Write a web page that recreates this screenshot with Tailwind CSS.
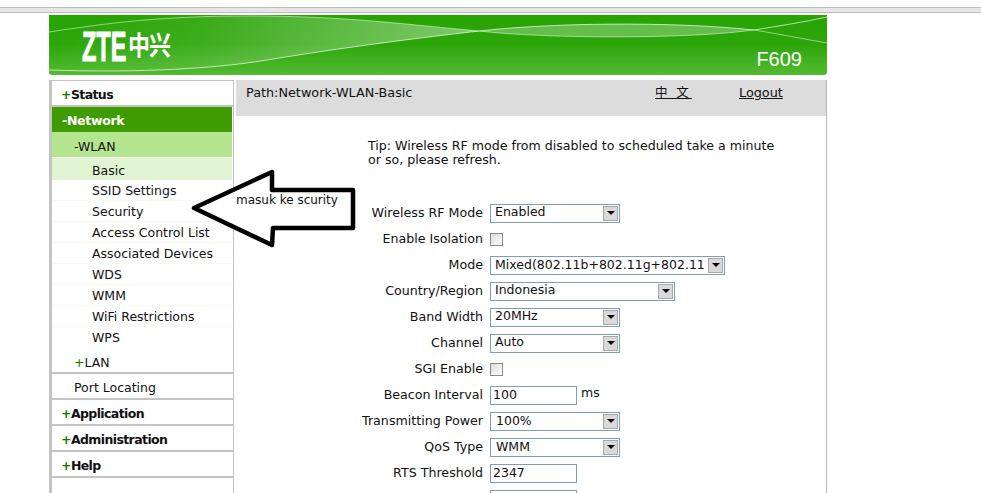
<!DOCTYPE html>
<html lang="en">
<head>
  <meta charset="UTF-8">
  <title>ZTE F609</title>
  <script src="https://cdn.jsdelivr.net/npm/@tailwindcss/browser@4"></script>
</head>
<body class="bg-white h-[493px] w-[981px] overflow-hidden relative font-['DejaVu_Sans',sans-serif] text-[12.8px] text-[#111]">
  <!-- browser strip -->
  <div class="mt-[7px] h-[6px] border-y border-[#bdbdbd] bg-[#e6e6e6]"></div>

  <div class="ml-[49px] w-[778px]">
    <!-- banner -->
    <div class="relative mt-[2px] h-[60px] rounded-b-[3px] overflow-hidden bg-gradient-to-b from-[#28a304] via-[#2ca609] to-[#52bb2f]">
      <svg class="absolute inset-0" width="778" height="60" viewBox="0 0 778 60">
        <defs>
          <linearGradient id="lens" x1="0" x2="1" y1="0" y2="0">
            <stop offset="0" stop-color="#fff" stop-opacity="0"/>
            <stop offset="0.35" stop-color="#fff" stop-opacity="0.08"/>
            <stop offset="0.7" stop-color="#fff" stop-opacity="0.26"/>
            <stop offset="1" stop-color="#fff" stop-opacity="0.4"/>
          </linearGradient>
        </defs>
        <path d="M0 17 C60 8 110 1 200 1 C300 1 360 10 430 16 C360 24 300 32 230 43 C170 54 90 58 0 55 Z" fill="url(#lens)"/>
        <path d="M430 16 C500 8 620 6 705 15 C640 24 500 24 430 16 Z" fill="#fff" opacity="0.28"/>
        <path d="M0 17 C60 8 110 1 200 1 C300 1 360 10 430 16 C500 24 640 24 705 15 C730 19 755 24 778 28" fill="none" stroke="#fff" stroke-opacity="0.5"/>
        <path d="M0 55 C90 58 170 54 230 43 C300 32 360 24 430 16 C500 8 620 6 705 15 C730 11 755 7 778 2" fill="none" stroke="#fff" stroke-opacity="0.65"/>
      </svg>
      <span class="absolute left-[33px] top-[11px] font-['Liberation_Sans',sans-serif] font-bold text-[42px] leading-none text-white scale-x-[0.56] origin-left [-webkit-text-stroke:1px_white]">ZTE</span>
      <span class="absolute left-[79px] top-[17px] font-['Noto_Sans_CJK_SC',sans-serif] font-bold text-[22px] leading-none tracking-[-1px] text-white scale-y-[1.2]">中兴</span>
      <div class="absolute right-[25px] top-[34px] font-['Liberation_Sans',sans-serif] text-[20px] leading-none text-white">F609</div>
    </div>

    <div class="flex mt-[5px] items-start">
      <!-- menu -->
      <div class="w-[185px] h-[420px] shrink-0 border-l-[3px] border-r border-t border-[#c4c4c4] text-[12.5px]">
        <div class="h-[26px] pt-[4px] border-b-2 border-[#c4c4c4] pl-[9px] flex items-center font-bold tracking-[-0.6px]"><span class="text-[#0a7d00]">+</span>Status</div>
        <div class="h-[25px] pt-[4px] mr-[1px] bg-[#3f9c00] text-white font-bold pl-[10px] flex items-center tracking-[-0.3px]">-Network</div>
        <div class="h-[26px] pt-[5px] mr-[1px] bg-[#b5e58f] pl-[22px] flex items-center border-b border-white">-WLAN</div>
        <div class="h-[22px] pt-[4px] mr-[1px] bg-[#e1f4d3] pl-[40px] flex items-center">Basic</div>
        <div class="h-[21px] pt-[2px] pl-[40px] flex items-center border-b border-[#f6fbf0]">SSID Settings</div>
        <div class="h-[21px] pt-[2px] pl-[40px] flex items-center border-b border-[#f6fbf0]">Security</div>
        <div class="h-[21px] pt-[2px] pl-[40px] flex items-center border-b border-[#f6fbf0]">Access Control List</div>
        <div class="h-[21px] pt-[2px] pl-[40px] flex items-center border-b border-[#f6fbf0]">Associated Devices</div>
        <div class="h-[21px] pt-[2px] pl-[40px] flex items-center border-b border-[#f6fbf0]">WDS</div>
        <div class="h-[21px] pt-[2px] pl-[40px] flex items-center border-b border-[#f6fbf0]">WMM</div>
        <div class="h-[21px] pt-[2px] pl-[40px] flex items-center border-b border-[#f6fbf0]">WiFi Restrictions</div>
        <div class="h-[21px] pt-[2px] pl-[40px] flex items-center">WPS</div>
        <div class="h-[26px] pt-[6px] pl-[22px] flex items-center border-b-2 border-[#c4c4c4]"><span class="text-[#0a7d00]">+</span>LAN</div>
        <div class="h-[26px] pt-[4px] pl-[22px] flex items-center border-b-2 border-[#c4c4c4]">Port Locating</div>
        <div class="h-[26px] pt-[4px] pl-[9px] flex items-center border-b-2 border-[#c4c4c4] font-bold tracking-[-0.6px]"><span class="text-[#0a7d00]">+</span>Application</div>
        <div class="h-[26px] pt-[4px] pl-[9px] flex items-center border-b-2 border-[#c4c4c4] font-bold tracking-[-0.6px]"><span class="text-[#0a7d00]">+</span>Administration</div>
        <div class="h-[26px] pt-[4px] pl-[9px] flex items-center border-b-2 border-[#c4c4c4] font-bold tracking-[-0.6px]"><span class="text-[#0a7d00]">+</span>Help</div>
      </div>

      <!-- content -->
      <div class="ml-[2px] flex-1 h-[420px] border-r border-[#b5b5b5]">
        <div class="h-[36px] bg-[#dcdcdc] relative pl-[10px] pt-[3px]">
          Path:Network-WLAN-Basic
          <a class="absolute left-[419px] top-[3px] underline font-['Noto_Sans_CJK_SC',sans-serif] tracking-[3px] text-[12.5px]">中 文</a>
          <a class="absolute left-[503px] top-[3px] underline">Logout</a>
        </div>

        <p class="ml-[132px] mt-[23px] w-[420px] leading-[14px] text-[12.6px]">Tip: Wireless RF mode from disabled to scheduled take a minute<br>or so, please refresh.</p>

        <div class="mt-[33px] flex flex-col text-[12.5px]">
          <div class="h-[26px] flex items-center">
            <span class="w-[247px] text-right text-[12.65px]">Wireless RF Mode</span>
            <div class="ml-[7px] w-[130px] h-[19px] border border-[#7f9db9] flex items-center justify-between pl-[4px] pr-[1px]"><span class="-mt-[2px]">Enabled</span><span class="w-[15px] h-[15px] bg-[#d9d9d9] border border-[#a8a8a8] flex items-center justify-center"><span class="border-x-[4px] border-t-[4px] border-x-transparent border-t-black"></span></span></div>
          </div>
          <div class="h-[26px] flex items-center">
            <span class="w-[247px] text-right text-[12.65px]">Enable Isolation</span>
            <span class="ml-[7px] w-[13px] h-[13px] border border-[#8a8a8a] bg-gradient-to-br from-[#dcdcdc] to-white"></span>
          </div>
          <div class="h-[26px] flex items-center">
            <span class="w-[247px] text-right text-[12.65px]">Mode</span>
            <div class="ml-[7px] w-[235px] h-[19px] border border-[#7f9db9] flex items-center justify-between pl-[4px] pr-[1px]"><span class="w-[209px] overflow-hidden whitespace-nowrap">Mixed(802.11b+802.11g+802.11n)</span><span class="w-[15px] h-[15px] bg-[#d9d9d9] border border-[#a8a8a8] flex items-center justify-center"><span class="border-x-[4px] border-t-[4px] border-x-transparent border-t-black"></span></span></div>
          </div>
          <div class="h-[26px] flex items-center">
            <span class="w-[247px] text-right text-[12.65px]">Country/Region</span>
            <div class="ml-[7px] w-[185px] h-[19px] border border-[#7f9db9] flex items-center justify-between pl-[4px] pr-[1px]"><span class="-mt-[2px]">Indonesia</span><span class="w-[15px] h-[15px] bg-[#d9d9d9] border border-[#a8a8a8] flex items-center justify-center"><span class="border-x-[4px] border-t-[4px] border-x-transparent border-t-black"></span></span></div>
          </div>
          <div class="h-[26px] flex items-center">
            <span class="w-[247px] text-right text-[12.65px]">Band Width</span>
            <div class="ml-[7px] w-[130px] h-[19px] border border-[#7f9db9] flex items-center justify-between pl-[4px] pr-[1px]"><span class="-mt-[2px]">20MHz</span><span class="w-[15px] h-[15px] bg-[#d9d9d9] border border-[#a8a8a8] flex items-center justify-center"><span class="border-x-[4px] border-t-[4px] border-x-transparent border-t-black"></span></span></div>
          </div>
          <div class="h-[26px] flex items-center">
            <span class="w-[247px] text-right text-[12.65px]">Channel</span>
            <div class="ml-[7px] w-[130px] h-[19px] border border-[#7f9db9] flex items-center justify-between pl-[4px] pr-[1px]"><span class="-mt-[2px]">Auto</span><span class="w-[15px] h-[15px] bg-[#d9d9d9] border border-[#a8a8a8] flex items-center justify-center"><span class="border-x-[4px] border-t-[4px] border-x-transparent border-t-black"></span></span></div>
          </div>
          <div class="h-[26px] flex items-center">
            <span class="w-[247px] text-right text-[12.65px]">SGI Enable</span>
            <span class="ml-[7px] w-[13px] h-[13px] border border-[#8a8a8a] bg-gradient-to-br from-[#dcdcdc] to-white"></span>
          </div>
          <div class="h-[26px] flex items-center">
            <span class="w-[247px] text-right text-[12.65px]">Beacon Interval</span>
            <div class="ml-[7px] w-[87px] h-[19px] border border-[#7f9db9] flex items-center pl-[2px]">100</div>
            <span class="ml-[4px] -mt-[3px]">ms</span>
          </div>
          <div class="h-[26px] flex items-center">
            <span class="w-[247px] text-right text-[12.65px]">Transmitting Power</span>
            <div class="ml-[7px] w-[130px] h-[19px] border border-[#7f9db9] flex items-center justify-between pl-[5px] pr-[1px]">100%<span class="w-[15px] h-[15px] bg-[#d9d9d9] border border-[#a8a8a8] flex items-center justify-center"><span class="border-x-[4px] border-t-[4px] border-x-transparent border-t-black"></span></span></div>
          </div>
          <div class="h-[26px] flex items-center">
            <span class="w-[247px] text-right text-[12.65px]">QoS Type</span>
            <div class="ml-[7px] w-[130px] h-[19px] border border-[#7f9db9] flex items-center justify-between pl-[5px] pr-[1px]">WMM<span class="w-[15px] h-[15px] bg-[#d9d9d9] border border-[#a8a8a8] flex items-center justify-center"><span class="border-x-[4px] border-t-[4px] border-x-transparent border-t-black"></span></span></div>
          </div>
          <div class="h-[26px] flex items-center">
            <span class="w-[247px] text-right text-[12.65px]">RTS Threshold</span>
            <div class="ml-[7px] w-[87px] h-[19px] border border-[#7f9db9] flex items-center pl-[2px]">2347</div>
          </div>
          <div class="h-[26px] flex items-start pt-[4px]">
            <span class="w-[247px]"></span>
            <div class="ml-[7px] w-[87px] h-[19px] border border-[#7f9db9]"></div>
          </div>
        </div>
      </div>
    </div>
  </div>

  <!-- annotation drawn over the page -->
  <svg class="absolute left-0 top-0 pointer-events-none" width="981" height="493">
    <path d="M194 208 L272 172 L272 190 L353 190 L353 228 L273 228 L272 245 Z" fill="white" stroke="black" stroke-width="4.5" stroke-linejoin="round"/>
  </svg>
  <span class="absolute left-[236px] top-[191px] text-[12px]">masuk ke scurity</span>
</body>
</html>
